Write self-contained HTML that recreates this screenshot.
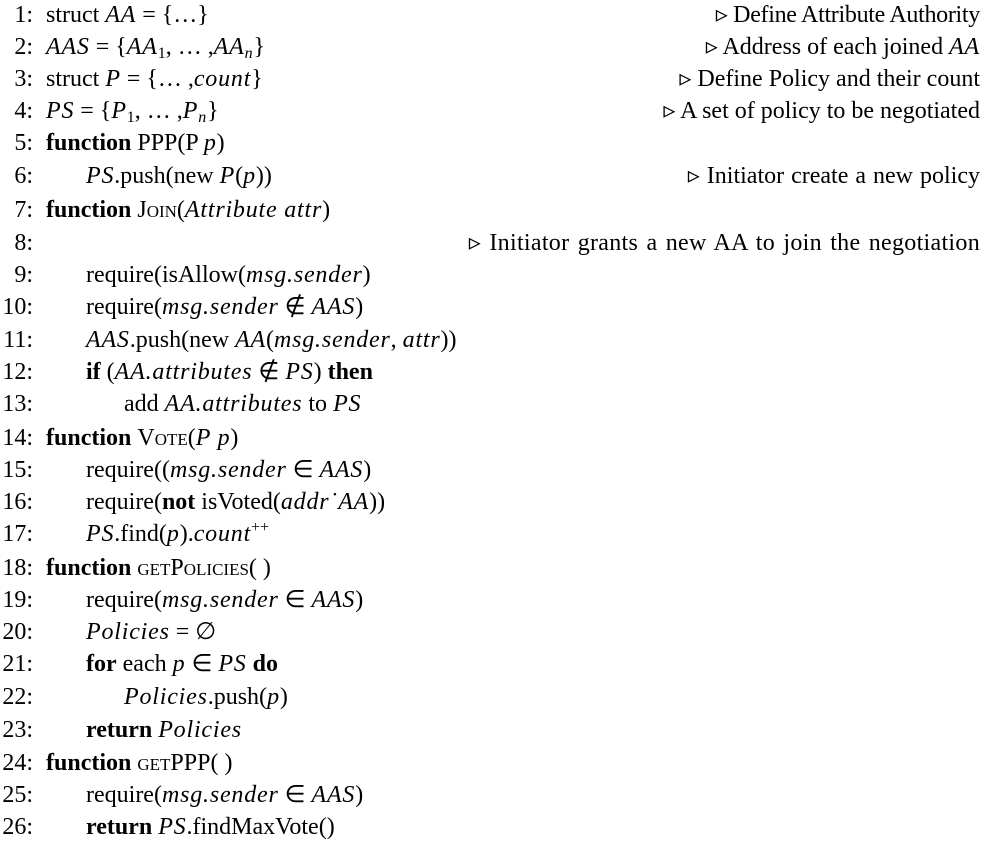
<!DOCTYPE html>
<html><head><meta charset="utf-8"><style>
body{margin:0;width:986px;height:850px;background:#fff;position:relative;font-family:"Liberation Serif",serif;font-size:24px;color:#000;overflow:hidden}
.l{position:absolute;left:0;width:986px;height:28px;line-height:28px;white-space:nowrap}
.n{position:absolute;left:0;width:33px;text-align:right}
.t{position:absolute;left:46px}
.i1{left:86px}.i2{left:124px}
.c{position:absolute;right:6px}
i{font-style:italic;letter-spacing:0.8px}
b{font-weight:bold}
.sc{font-variant:small-caps}
sub{font-size:16px;vertical-align:-4px;line-height:0}
sup{font-size:16px;vertical-align:9px;line-height:0}
</style></head><body>
<div class="l" style="top:1px"><span class="n">1:</span><span class="t">struct <i>AA</i> = {…}</span><span class="c" style="letter-spacing:-0.3px">▹ Define Attribute Authority</span></div>
<div class="l" style="top:33px"><span class="n">2:</span><span class="t"><i>AAS</i> = {<i>AA</i><sub>1</sub>, … ,<i>AA<sub>n</sub></i>}</span><span class="c">▹ Address of each joined <i>AA</i></span></div>
<div class="l" style="top:65px"><span class="n">3:</span><span class="t">struct <i>P</i> = {… ,<i>count</i>}</span><span class="c">▹ Define Policy and their count</span></div>
<div class="l" style="top:97px"><span class="n">4:</span><span class="t"><i>PS</i> = {<i>P</i><sub>1</sub>, … ,<i>P<sub>n</sub></i>}</span><span class="c">▹ A set of policy to be negotiated</span></div>
<div class="l" style="top:129px"><span class="n">5:</span><span class="t"><b>function</b> PPP(P <i>p</i>)</span></div>
<div class="l" style="top:162px"><span class="n">6:</span><span class="t i1"><i>PS</i>.push(new <i>P</i>(<i>p</i>))</span><span class="c" style="word-spacing:1px">▹ Initiator create a new policy</span></div>
<div class="l" style="top:196px"><span class="n">7:</span><span class="t"><b>function</b> <span class="sc">Join</span>(<i>Attribute attr</i>)</span></div>
<div class="l" style="top:229px"><span class="n">8:</span><span class="c" style="word-spacing:2px;letter-spacing:0.3px">▹ Initiator grants a new AA to join the negotiation</span></div>
<div class="l" style="top:261px"><span class="n">9:</span><span class="t i1">require(isAllow(<i>msg.sender</i>)</span></div>
<div class="l" style="top:293px"><span class="n">10:</span><span class="t i1">require(<i>msg.sender</i> ∉ <i>AAS</i>)</span></div>
<div class="l" style="top:326px"><span class="n">11:</span><span class="t i1"><i>AAS</i>.push(new <i>AA</i>(<i>msg.sender</i>, <i>attr</i>))</span></div>
<div class="l" style="top:358px"><span class="n">12:</span><span class="t i1"><b>if</b> (<i>AA.attributes</i> ∉ <i>PS</i>) <b>then</b></span></div>
<div class="l" style="top:390px"><span class="n">13:</span><span class="t i2">add <i>AA.attributes</i> to <i>PS</i></span></div>
<div class="l" style="top:424px"><span class="n">14:</span><span class="t"><b>function</b> <span class="sc">Vote</span>(<i>P p</i>)</span></div>
<div class="l" style="top:456px"><span class="n">15:</span><span class="t i1">require((<i>msg.sender</i> ∈ <i>AAS</i>)</span></div>
<div class="l" style="top:488px"><span class="n">16:</span><span class="t i1">require(<b>not</b> isVoted(<i>addr˙AA</i>))</span></div>
<div class="l" style="top:520px"><span class="n">17:</span><span class="t i1"><i>PS</i>.find(<i>p</i>).<i>count</i><sup>++</sup></span></div>
<div class="l" style="top:554px"><span class="n">18:</span><span class="t"><b>function</b> <span class="sc">getPolicies</span>( )</span></div>
<div class="l" style="top:586px"><span class="n">19:</span><span class="t i1">require(<i>msg.sender</i> ∈ <i>AAS</i>)</span></div>
<div class="l" style="top:618px"><span class="n">20:</span><span class="t i1"><i>Policies</i> = ∅</span></div>
<div class="l" style="top:650px"><span class="n">21:</span><span class="t i1"><b>for</b> each <i>p</i> ∈ <i>PS</i> <b>do</b></span></div>
<div class="l" style="top:683px"><span class="n">22:</span><span class="t i2"><i>Policies</i>.push(<i>p</i>)</span></div>
<div class="l" style="top:716px"><span class="n">23:</span><span class="t i1"><b>return</b> <i>Policies</i></span></div>
<div class="l" style="top:749px"><span class="n">24:</span><span class="t"><b>function</b> <span class="sc">getPPP</span>( )</span></div>
<div class="l" style="top:781px"><span class="n">25:</span><span class="t i1">require(<i>msg.sender</i> ∈ <i>AAS</i>)</span></div>
<div class="l" style="top:813px"><span class="n">26:</span><span class="t i1"><b>return</b> <i>PS</i>.findMaxVote()</span></div>
</body></html>
